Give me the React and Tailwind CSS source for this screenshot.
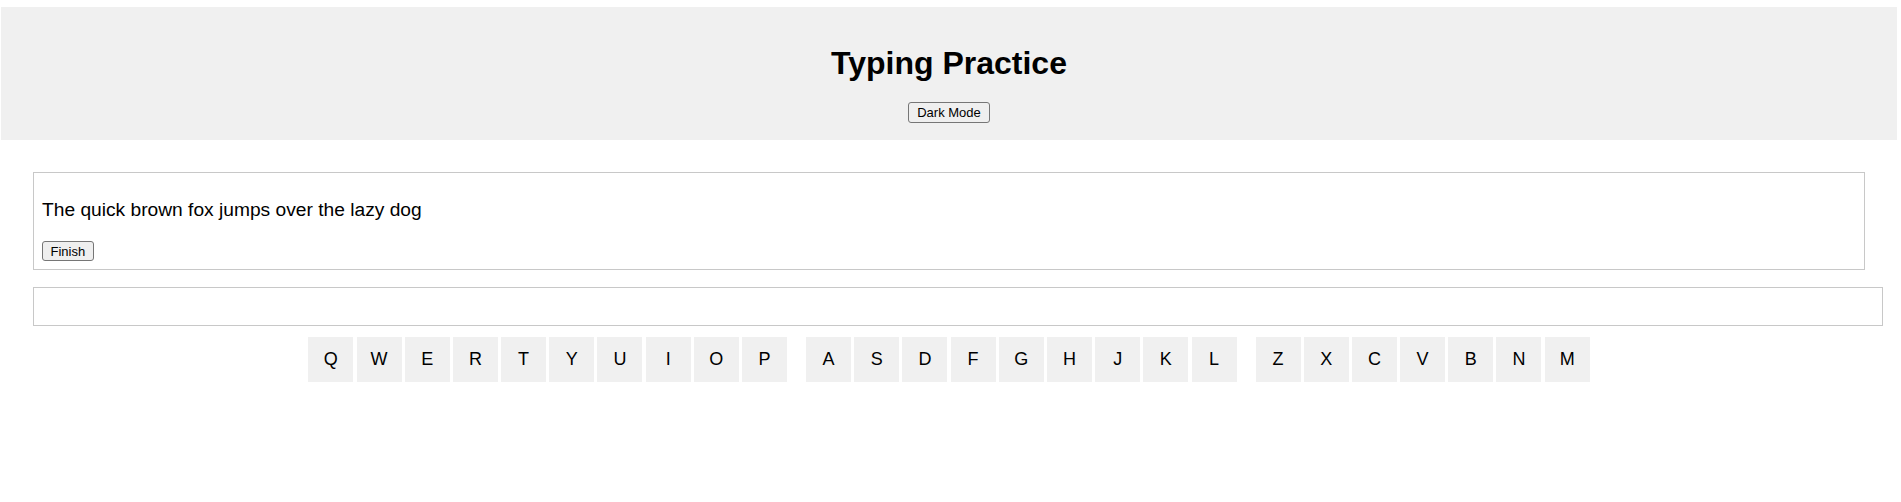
import React from "react";

const rows = [
  ["Q", "W", "E", "R", "T", "Y", "U", "I", "O", "P"],
  ["A", "S", "D", "F", "G", "H", "J", "K", "L"],
  ["Z", "X", "C", "V", "B", "N", "M"],
];

export default function App() {
  return (
    <div className="font-['Liberation_Sans',Arial,sans-serif] text-black bg-white min-h-[502px]">
      <header className="mt-[7px] ml-[1px] mr-[4px] bg-[#f0f0f0] pt-[38px] pb-[17px] flex flex-col items-center">
        <h1 className="text-[32px] font-bold leading-[37px] m-0">Typing Practice</h1>
        <button className="mt-[20px] h-[21px] px-[8px] text-[13px] leading-[15px] bg-[#efefef] border border-[#767676] rounded-[3px] text-black">
          Dark Mode
        </button>
      </header>
      <main className="ml-[33px] w-[1832px]">
        <div className="mt-[32px] border border-[#c8c8c8] p-[8px]">
          <p className="mt-[18px] mb-[20px] text-[19.2px] leading-[22px]">
            The quick brown fox jumps over the lazy dog
          </p>
          <button className="block h-[20px] px-[7.5px] text-[13px] leading-[15px] bg-[#efefef] border border-[#767676] rounded-[3px] text-black">
            Finish
          </button>
        </div>
        <input
          type="text"
          className="mt-[17px] block w-[1850px] h-[39px] border border-[#c8c8c8] px-[8px] text-[19.2px] outline-none"
        />
        <div className="mt-[11px] flex justify-center gap-[19px]">
          {rows.map((row, i) => (
            <div key={i} className="flex gap-[3.2px]">
              {row.map((k) => (
                <div
                  key={k}
                  className="w-[45px] h-[45px] bg-[#f0f0f0] flex items-center justify-center text-[18px]"
                >
                  {k}
                </div>
              ))}
            </div>
          ))}
        </div>
      </main>
    </div>
  );
}
